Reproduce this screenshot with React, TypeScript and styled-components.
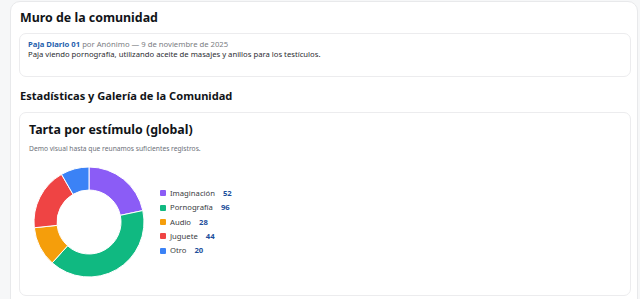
import styled, { createGlobalStyle } from 'styled-components';

const GlobalStyle = createGlobalStyle`
  html, body {
    margin: 0;
    padding: 0;
    background: #f6f7f8;
    font-family: 'Noto Sans', 'Open Sans', Arial, sans-serif;
  }
`;

type Slice = { label: string; value: number; color: string };

const slices: Slice[] = [
  { label: 'Imaginación', value: 52, color: '#8b5cf6' },
  { label: 'Pornografía', value: 96, color: '#10b981' },
  { label: 'Audio', value: 28, color: '#f59e0b' },
  { label: 'Juguete', value: 44, color: '#ef4444' },
  { label: 'Otro', value: 20, color: '#3b82f6' },
];

const Page = styled.div`
  padding: 1px 2px 0 10px;
`;

const Panel = styled.section`
  background: #fff;
  border: 1px solid #e8e9eb;
  border-radius: 10px;
  padding: 7px 6px 4px 8px;
  min-height: 320px;
  box-sizing: border-box;
`;

const SectionTitle = styled.h2<{ $size: number; $lh: number }>`
  margin: 0;
  font-size: ${p => p.$size}px;
  line-height: ${p => p.$lh}px;
  font-weight: 700;
  color: #111418;
  padding-left: 1px;
`;

const Card = styled.div<{ $pad: string }>`
  border: 1px solid #ececee;
  border-radius: 7px;
  background: #fff;
  padding: ${p => p.$pad};
`;

const PostMeta = styled.div`
  font-size: 7.7px;
  line-height: 10px;
  color: #7a7d82;
`;

const PostTitle = styled.span`
  color: #1f5fae;
  font-weight: 700;
`;

const PostBody = styled.div`
  font-size: 7.7px;
  line-height: 10px;
  color: #2b2d31;
`;

const Gap = styled.div<{ $h: number }>`
  height: ${p => p.$h}px;
`;

const CardTitle = styled.h3`
  margin: 0;
  font-size: 12.4px;
  line-height: 17px;
  font-weight: 700;
  color: #111418;
`;

const Note = styled.p`
  margin: 6px 0 0;
  font-size: 6.7px;
  line-height: 9px;
  color: #6b7078;
`;

const ChartRow = styled.div`
  display: flex;
  align-items: center;
  gap: 15px;
  margin-top: 13px;
  padding-left: 4px;
`;

const Legend = styled.ul`
  list-style: none;
  margin: 0;
  padding: 0;
  display: flex;
  flex-direction: column;
  gap: 3.8px;
`;

const LegendItem = styled.li`
  display: flex;
  align-items: center;
  font-size: 7.7px;
  line-height: 10.5px;
  color: #3a3d42;
`;

const Swatch = styled.span<{ $color: string }>`
  width: 6px;
  height: 6px;
  border-radius: 1px;
  background: ${p => p.$color};
  margin-right: 4px;
`;

const Count = styled.b`
  color: #1e4f9c;
  margin-left: 8px;
  font-weight: 700;
`;

function Donut({ data }: { data: Slice[] }) {
  const total = data.reduce((s, d) => s + d.value, 0);
  const R = 55;
  const r = 32;
  const c = 56;
  let acc = 0;
  const pt = (rad: number, ang: number) => {
    const a = (ang - 90) * (Math.PI / 180);
    return `${c + rad * Math.cos(a)} ${c + rad * Math.sin(a)}`;
  };
  return (
    <svg width={112} height={112} viewBox="0 0 112 112">
      {data.map(d => {
        const start = (acc / total) * 360;
        acc += d.value;
        const end = (acc / total) * 360;
        const large = end - start > 180 ? 1 : 0;
        const path = `M ${pt(R, start)} A ${R} ${R} 0 ${large} 1 ${pt(R, end)} L ${pt(r, end)} A ${r} ${r} 0 ${large} 0 ${pt(r, start)} Z`;
        return <path key={d.label} d={path} fill={d.color} stroke="#fff" strokeWidth={1} />;
      })}
    </svg>
  );
}

export default function App() {
  return (
    <>
      <GlobalStyle />
      <Page>
        <Panel>
          <SectionTitle $size={12.4} $lh={18}>Muro de la comunidad</SectionTitle>
          <Gap $h={6} />
          <Card $pad="5px 8px 17px">
            <PostMeta>
              <PostTitle>Paja Diario 01</PostTitle> por Anónimo — 9 de noviembre de 2025
            </PostMeta>
            <PostBody>
              Paja viendo pornografía, utilizando aceite de masajes y anillos para los testículos.
            </PostBody>
          </Card>
          <Gap $h={11} />
          <SectionTitle $size={11.1} $lh={15}>Estadísticas y Galería de la Comunidad</SectionTitle>
          <Gap $h={9} />
          <Card $pad="8px 9px 17px">
            <CardTitle>Tarta por estímulo (global)</CardTitle>
            <Note>Demo visual hasta que reunamos suficientes registros.</Note>
            <ChartRow>
              <Donut data={slices} />
              <Legend>
                {slices.map(s => (
                  <LegendItem key={s.label}>
                    <Swatch $color={s.color} />
                    {s.label}
                    <Count>{s.value}</Count>
                  </LegendItem>
                ))}
              </Legend>
            </ChartRow>
          </Card>
        </Panel>
      </Page>
    </>
  );
}
